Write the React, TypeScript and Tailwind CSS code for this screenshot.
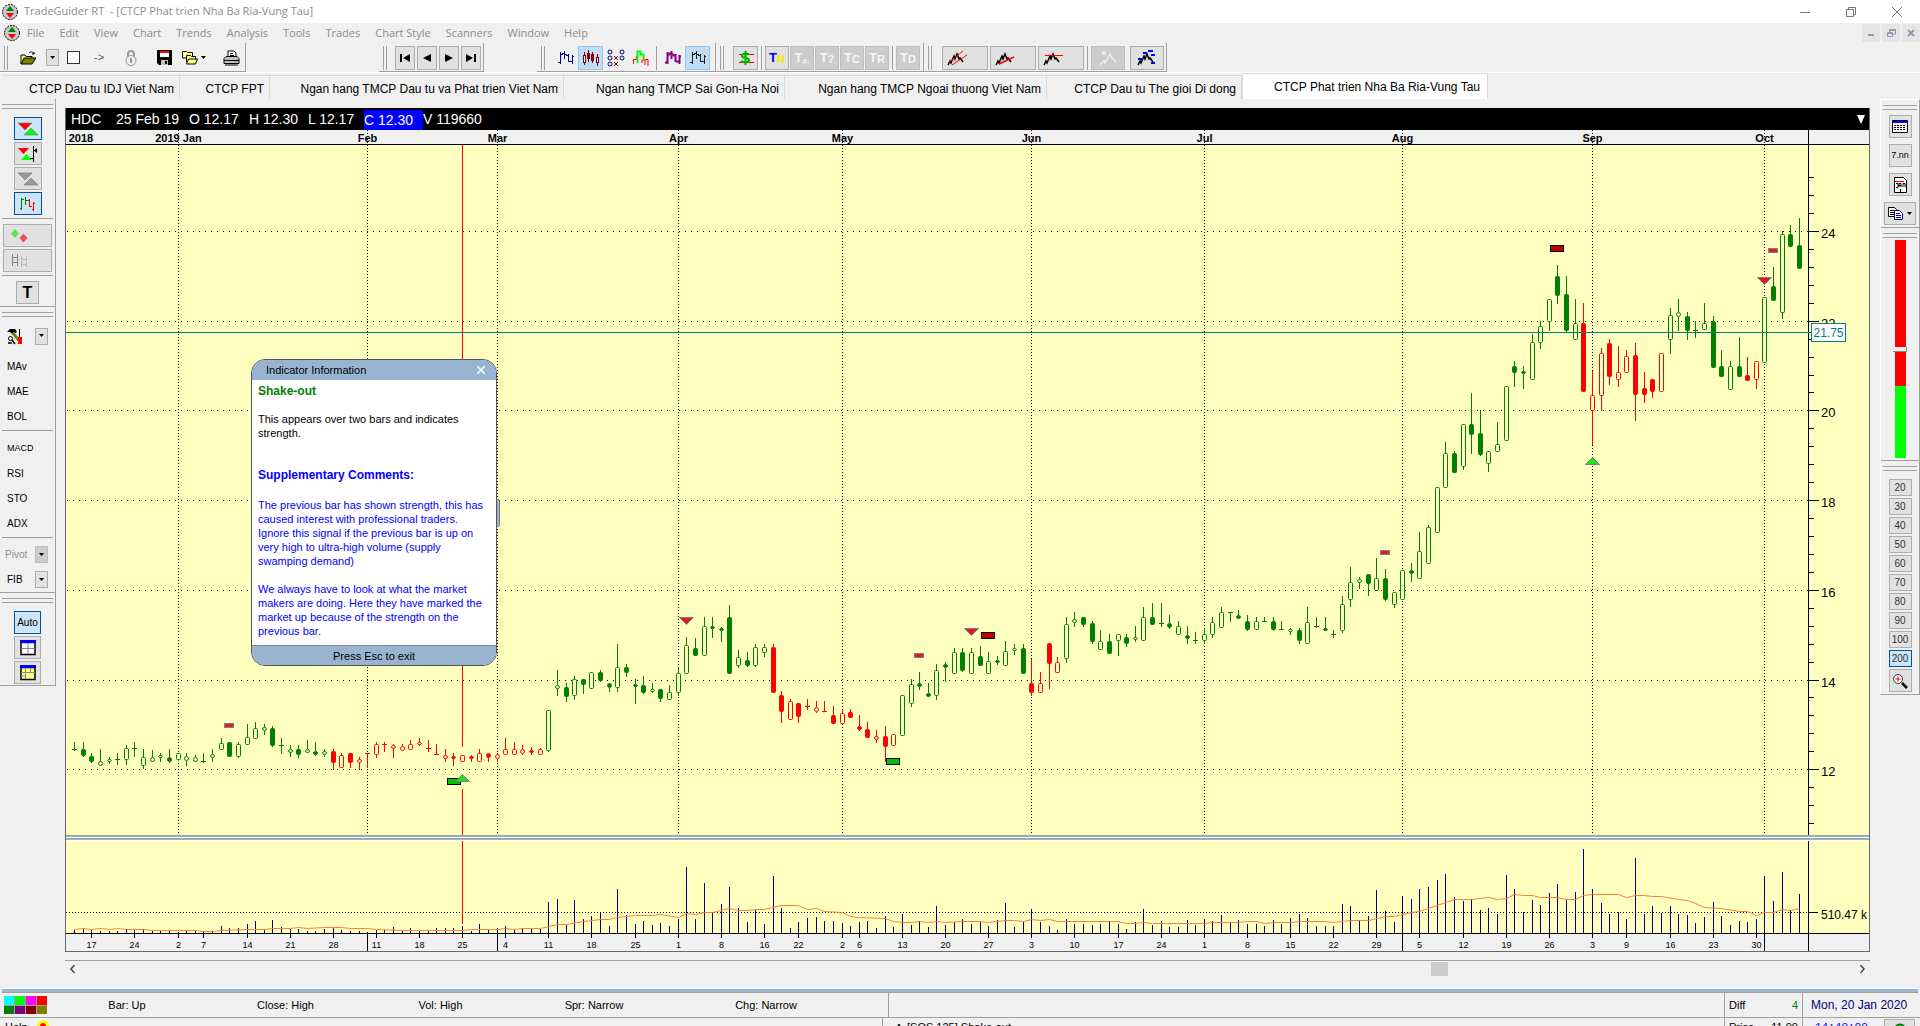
import React from 'react';
import { clsx } from 'clsx';

// [high, body top, body bottom, low, kind] - kind: g/r hollow, G/R filled
type Candle = [number, number, number, number, string];

const candles: Candle[] = [
  [742, 749, 749, 750, 'g'], [742, 749, 755, 756, 'G'], [753, 756, 761, 762, 'G'], [749, 761, 765, 765, 'g'], [757, 759, 761, 763, 'g'],
  [753, 759, 759, 764, 'g'], [745, 748, 759, 764, 'g'], [742, 748, 748, 756, 'g'], [749, 757, 765, 768, 'g'], [750, 757, 761, 761, 'g'],
  [753, 755, 757, 761, 'g'], [749, 757, 761, 762, 'G'], [753, 753, 759, 760, 'g'], [753, 756, 760, 765, 'g'], [755, 757, 761, 761, 'g'],
  [753, 761, 761, 762, 'g'], [749, 754, 757, 761, 'g'], [738, 743, 749, 749, 'g'], [742, 742, 756, 756, 'G'], [742, 744, 756, 757, 'g'],
  [724, 737, 744, 744, 'g'], [722, 728, 738, 738, 'g'], [724, 727, 730, 734, 'g'], [726, 728, 745, 746, 'G'], [738, 745, 745, 753, 'g'],
  [745, 749, 752, 756, 'g'], [745, 749, 754, 757, 'G'], [740, 749, 752, 752, 'g'], [742, 751, 754, 755, 'G'], [749, 751, 754, 756, 'g'],
  [749, 751, 762, 769, 'R'], [753, 755, 767, 767, 'r'], [753, 753, 762, 767, 'R'], [757, 759, 762, 769, 'r'], [753, 753, 753, 767, 'R'],
  [742, 744, 754, 757, 'r'], [742, 744, 744, 751, 'r'], [744, 745, 748, 757, 'r'], [744, 746, 750, 750, 'r'], [740, 744, 749, 749, 'r'],
  [738, 742, 744, 745, 'r'], [740, 748, 748, 751, 'R'], [744, 754, 754, 754, 'R'], [749, 755, 758, 761, 'r'], [753, 756, 758, 765, 'R'],
  [755, 755, 761, 761, 'r'], [755, 756, 758, 761, 'R'], [749, 753, 761, 761, 'r'], [753, 753, 757, 761, 'R'], [753, 754, 758, 761, 'r'],
  [738, 749, 754, 754, 'r'], [742, 749, 754, 754, 'r'], [745, 749, 753, 754, 'r'], [747, 750, 752, 754, 'R'], [748, 749, 754, 754, 'r'],
  [710, 710, 750, 751, 'g'], [670, 685, 688, 695, 'g'], [683, 687, 696, 701, 'G'], [676, 679, 695, 699, 'g'], [679, 679, 684, 693, 'G'],
  [672, 672, 688, 688, 'g'], [670, 672, 680, 681, 'G'], [683, 683, 687, 691, 'G'], [644, 667, 687, 691, 'g'], [664, 667, 672, 676, 'G'],
  [679, 684, 686, 703, 'G'], [676, 685, 692, 693, 'G'], [683, 689, 691, 692, 'g'], [689, 689, 698, 701, 'G'], [685, 692, 699, 699, 'g'],
  [667, 673, 692, 695, 'g'], [637, 645, 673, 673, 'g'], [638, 648, 655, 655, 'G'], [617, 626, 655, 655, 'g'], [617, 626, 628, 637, 'G'],
  [627, 628, 630, 641, 'G'], [605, 617, 673, 673, 'G'], [650, 657, 665, 667, 'g'], [652, 660, 665, 666, 'G'], [644, 647, 665, 666, 'g'],
  [644, 647, 652, 656, 'g'], [644, 647, 692, 692, 'R'], [691, 695, 711, 722, 'R'], [699, 701, 719, 719, 'r'], [703, 703, 716, 722, 'R'],
  [699, 706, 706, 709, 'R'], [701, 707, 711, 712, 'r'], [701, 711, 711, 711, 'R'], [706, 715, 723, 723, 'R'], [710, 713, 723, 723, 'r'],
  [709, 712, 717, 717, 'R'], [715, 726, 729, 730, 'R'], [722, 729, 737, 737, 'R'], [730, 736, 739, 742, 'r'], [726, 736, 746, 761, 'R'],
  [734, 734, 745, 745, 'r'], [695, 695, 735, 735, 'g'], [679, 684, 703, 706, 'g'], [672, 683, 686, 689, 'G'], [683, 693, 696, 696, 'G'],
  [664, 670, 695, 699, 'g'], [662, 664, 667, 681, 'G'], [648, 652, 673, 673, 'g'], [648, 652, 670, 671, 'G'], [648, 652, 673, 673, 'g'],
  [646, 656, 665, 665, 'G'], [652, 661, 673, 673, 'g'], [656, 660, 662, 664, 'G'], [641, 651, 665, 665, 'g'], [644, 648, 650, 654, 'g'],
  [644, 648, 673, 673, 'G'], [659, 683, 692, 695, 'R'], [672, 683, 692, 692, 'r'], [643, 643, 663, 688, 'R'], [657, 662, 672, 672, 'r'],
  [617, 624, 658, 662, 'g'], [612, 619, 622, 626, 'g'], [617, 617, 624, 626, 'G'], [621, 623, 641, 643, 'G'], [630, 641, 649, 649, 'g'],
  [634, 641, 653, 653, 'G'], [634, 634, 640, 655, 'g'], [634, 637, 643, 646, 'G'], [626, 637, 639, 641, 'g'], [607, 617, 640, 640, 'g'],
  [603, 617, 624, 624, 'G'], [603, 623, 623, 626, 'G'], [615, 623, 627, 628, 'G'], [621, 626, 634, 634, 'g'], [626, 635, 638, 643, 'G'],
  [632, 640, 640, 643, 'G'], [628, 634, 640, 643, 'g'], [617, 622, 634, 637, 'g'], [607, 612, 627, 627, 'g'], [612, 612, 612, 621, 'G'],
  [610, 615, 618, 618, 'G'], [615, 621, 629, 630, 'G'], [617, 621, 629, 629, 'g'], [617, 621, 621, 621, 'G'], [617, 621, 629, 630, 'G'],
  [621, 629, 629, 629, 'G'], [628, 629, 631, 634, 'g'], [628, 630, 640, 643, 'G'], [607, 622, 643, 643, 'g'], [617, 626, 626, 627, 'G'],
  [617, 628, 630, 630, 'G'], [630, 634, 634, 637, 'G'], [596, 604, 630, 632, 'g'], [567, 582, 599, 606, 'g'], [577, 579, 582, 588, 'g'],
  [574, 574, 583, 595, 'G'], [558, 578, 590, 590, 'g'], [569, 578, 599, 600, 'G'], [592, 592, 604, 607, 'g'], [570, 570, 599, 599, 'g'],
  [563, 570, 573, 581, 'G'], [532, 551, 578, 578, 'g'], [525, 527, 563, 563, 'g'], [487, 487, 532, 532, 'g'], [442, 453, 487, 487, 'g'],
  [451, 453, 472, 472, 'G'], [424, 424, 466, 469, 'g'], [393, 424, 434, 453, 'G'], [410, 433, 454, 455, 'G'], [451, 451, 463, 471, 'g'],
  [422, 444, 451, 451, 'g'], [386, 386, 440, 440, 'g'], [361, 366, 372, 386, 'G'], [366, 371, 373, 388, 'G'], [334, 342, 379, 379, 'g'],
  [321, 326, 342, 348, 'g'], [299, 299, 321, 330, 'g'], [265, 276, 295, 303, 'G'], [276, 294, 330, 331, 'G'], [299, 323, 339, 339, 'g'],
  [303, 323, 391, 391, 'R'], [371, 395, 410, 444, 'r'], [348, 353, 395, 410, 'r'], [339, 343, 376, 384, 'R'], [346, 372, 379, 386, 'r'],
  [350, 356, 372, 372, 'r'], [343, 355, 394, 420, 'R'], [372, 388, 394, 402, 'R'], [379, 379, 391, 397, 'R'], [353, 353, 391, 391, 'r'],
  [308, 315, 339, 353, 'g'], [299, 312, 316, 330, 'g'], [312, 316, 330, 339, 'G'], [321, 330, 330, 337, 'G'], [303, 323, 329, 329, 'g'],
  [316, 321, 367, 367, 'G'], [350, 366, 376, 376, 'G'], [361, 366, 389, 389, 'g'], [337, 366, 376, 376, 'G'], [357, 375, 380, 380, 'R'],
  [361, 361, 379, 388, 'r'], [297, 297, 362, 362, 'g'], [267, 286, 300, 300, 'G'], [231, 234, 312, 318, 'g'], [225, 234, 246, 246, 'G'],
  [218, 245, 268, 268, 'G'],
];

const volumes = [
  3, 4, 3, 2, 2, 2, 4, 3, 4, 2, 3, 2, 1, 3, 2, 2, 2, 7, 5, 5, 9, 12, 3, 13, 6, 4, 4, 2, 2, 4, 5, 3, 2, 2, 1, 3, 3, 6, 2, 5,
  3, 3, 5, 5, 5, 7, 2, 9, 4, 5, 7, 3, 5, 4, 4, 31, 34, 8, 33, 14, 17, 21, 7, 44, 18, 9, 12, 8, 10, 7, 14, 66, 14, 50, 21, 29, 46, 25, 11, 23,
  9, 57, 25, 5, 11, 15, 16, 12, 12, 10, 7, 11, 12, 5, 17, 6, 19, 8, 12, 6, 27, 8, 11, 14, 9, 11, 7, 13, 30, 6, 11, 24, 11, 7, 3, 14, 9, 9, 8, 9,
  12, 9, 4, 11, 24, 8, 12, 6, 6, 13, 8, 14, 12, 18, 10, 13, 9, 9, 7, 13, 9, 15, 19, 15, 7, 7, 7, 29, 27, 12, 17, 43, 22, 11, 37, 34, 44, 46, 53, 59,
  36, 32, 34, 23, 25, 19, 58, 44, 21, 33, 28, 40, 49, 33, 41, 84, 44, 30, 19, 21, 14, 75, 19, 27, 20, 27, 19, 18, 10, 16, 31, 17, 8, 12, 11, 14, 57, 32, 61, 23,
  39,
];

// [bar, height above the base line]
const volumeAverage = [
  [0, 4], [1, 5], [2, 4], [3, 5], [4, 4], [5, 5], [6, 4], [8, 4], [9, 3], [14, 3], [15, 2], [16, 2], [17, 3], [20, 4], [22, 4], [23, 5],
  [25, 5], [26, 6], [27, 5], [29, 6], [31, 6], [32, 5], [34, 5], [35, 4], [38, 3], [45, 3], [46, 4], [49, 4], [50, 5], [51, 4], [52, 5],
  [54, 5], [56, 9], [57, 9], [59, 12], [61, 14], [62, 14], [63, 16], [65, 18], [67, 18], [68, 19], [70, 16], [71, 20], [72, 19], [73, 21],
  [74, 21], [76, 25], [77, 23], [78, 23], [79, 24], [80, 24], [82, 28], [84, 28], [85, 24], [86, 25], [87, 22], [89, 21], [90, 17],
  [91, 16], [94, 15], [95, 12], [96, 11], [97, 11], [98, 12], [99, 11], [100, 12], [101, 11], [103, 12], [105, 12], [106, 11], [108, 13],
  [109, 13], [110, 12], [111, 14], [112, 13], [113, 14], [114, 12], [121, 12], [122, 10], [123, 10], [124, 11], [125, 10], [131, 10],
  [132, 11], [135, 11], [136, 12], [137, 12], [138, 10], [139, 11], [141, 11], [142, 12], [145, 12], [146, 11], [148, 13], [150, 13],
  [152, 17], [153, 17], [155, 21], [156, 22], [157, 25], [160, 34], [162, 34], [164, 36], [165, 34], [166, 35], [167, 39], [168, 38],
  [169, 38], [170, 36], [172, 36], [173, 34], [174, 34], [175, 38], [176, 39], [179, 39], [180, 36], [181, 38], [182, 38], [183, 37],
  [184, 37], [186, 34], [187, 33], [188, 30], [189, 26], [191, 25], [193, 22], [194, 22], [195, 18], [196, 21], [197, 21], [198, 24],
  [199, 23], [200, 25],
];

const months: [number, string][] = [
  [12, '2019 Jan'], [34, 'Feb'], [49, 'Mar'], [70, 'Apr'], [89, 'May'], [111, 'Jun'], [131, 'Jul'], [154, 'Aug'], [176, 'Sep'], [196, 'Oct'],
];

const days: [number, number][] = [
  [2, 17], [7, 24], [12, 2], [15, 7], [20, 14], [25, 21], [30, 28], [35, 11], [40, 18], [45, 25], [50, 4], [55, 11], [60, 18], [65, 25],
  [70, 1], [75, 8], [80, 16], [84, 22], [89, 2], [91, 6], [96, 13], [101, 20], [106, 27], [111, 3], [116, 10], [121, 17], [126, 24],
  [131, 1], [136, 8], [141, 15], [146, 22], [151, 29], [156, 5], [161, 12], [166, 19], [171, 26], [176, 3], [180, 9], [185, 16],
  [190, 23], [195, 30],
];

const barX = (i: number) => Math.round(74.01 + i * 8.6245) + 0.5;
const priceY = (p: number) => Math.round(231 + (24 - p) * 44.85) + 0.5;

const CandleBar = ({ index, data }: { index: number; data: Candle }) => {
  const [high, top, bottom, low, kind] = data;
  const x = barX(index);
  const color = kind.toLowerCase() === 'g' ? '#008000' : '#ff0000';
  const filled = kind === 'G' || kind === 'R';
  if (top === bottom) {
    return <path d={`M${x} ${high}V${low + 1}M${x - 2.5} ${top + 0.5}h5`} stroke={color} fill="none" />;
  }
  return (
    <g stroke={color}>
      <path d={`M${x} ${high}V${top}M${x} ${bottom + 1}V${low + 1}`} />
      <rect x={x - 2} y={top + 0.5} width={4} height={bottom - top} rx={bottom - top <= 4 ? 2 : 1} fill={filled ? color : '#ffffc0'} />
    </g>
  );
};

const SmallMark = ({ x, y }: { x: number; y: number }) => (
  <rect x={x + 0.5} y={y + 0.5} width={9} height={4} fill="#e01b24" stroke="#808080" />
);

const BoxMark = ({ x, y, fill }: { x: number; y: number; fill: string }) => (
  <rect x={x + 0.5} y={y + 0.5} width={13} height={6} fill={fill} stroke="#000" />
);

const PriceChart = () => {
  const minorTicks = Array.from({ length: 37 }, (_, i) => 25.2 - i * 0.4).filter((p) => p > 10.7);
  return (
    <svg viewBox="66 130 1803 705" preserveAspectRatio="none" className="block h-[705px] w-full" aria-label="HDC price chart">
      <rect x={66} y={130} width={1803} height={14} fill="#f0f0f0" />
      <rect x={66} y={145} width={1803} height={690} fill="#ffffc0" />
      <path d="M66 144.5H1869" stroke="#000" />
      <g stroke="#000" fill="none">
        {[24, 22, 20, 18, 16, 14, 12].map((p) => (
          <path key={p} d={`M67 ${priceY(p)}H1808`} strokeDasharray="1 5" />
        ))}
        {months.map(([i]) => (
          <path key={i} d={`M${barX(i)} 130V834`} strokeDasharray="1 2" />
        ))}
        <path d="M1808.5 130V835" />
        {minorTicks.map((p) => (
          <path key={p} d={`M1809 ${priceY(p)}h5`} />
        ))}
        {[24, 22, 20, 18, 16, 14, 12].map((p) => (
          <path key={p} d={`M1809 ${priceY(p)}h10`} />
        ))}
      </g>
      <g fontSize={11} fontWeight="bold" textAnchor="middle">
        <text x={81} y={142}>2018</text>
        {months.map(([i, label]) => (
          <text key={i} x={barX(i)} y={142}>{label}</text>
        ))}
      </g>
      <g fontSize={13}>
        {[24, 22, 20, 18, 16, 14, 12].map((p) => (
          <text key={p} x={1821} y={priceY(p) + 6}>{p}</text>
        ))}
      </g>
      <path d="M462.5 145V747M462.5 789V835" stroke="#ff0000" />
      {candles.map((c, i) => (
        <CandleBar key={i} index={i} data={c} />
      ))}
      <SmallMark x={224} y={723} />
      <SmallMark x={914} y={653} />
      <SmallMark x={1380} y={550} />
      <SmallMark x={1768} y={248} />
      <BoxMark x={981} y={632} fill="#c00000" />
      <BoxMark x={1550} y={245} fill="#c00000" />
      <BoxMark x={886} y={758} fill="#00c000" />
      <BoxMark x={447} y={778} fill="#00c000" />
      <g fill="#e01b24" stroke="#808080">
        <path d="M679.5 617.5h14l-7 7z" />
        <path d="M964.5 628.5h14l-7 7z" />
        <path d="M1757.5 277.5h14l-7 7z" />
      </g>
      <g fill="#22e022" stroke="#808080">
        <path d="M455.5 781.5h14l-7-7z" />
        <path d="M1585.5 464.5h14l-7-7z" />
      </g>
      <path d="M66 332.5H1811" stroke="#008080" />
      <rect x={1811.5} y={323.5} width={34} height={18} fill="#fff" stroke="#008080" />
      <text x={1828.5} y={337} fontSize={12} fill="#008080" textAnchor="middle">21.75</text>
    </svg>
  );
};

const VolumeChart = () => (
  <svg viewBox="66 841 1803 110" preserveAspectRatio="none" className="block h-[110px] w-full" aria-label="Volume chart">
    <rect x={66} y={841} width={1803} height={92} fill="#ffffc0" />
    <rect x={66} y={934} width={1803} height={17} fill="#f0f0f0" />
    <path d="M66 912.5H1808" stroke="#000" strokeDasharray="1 2" />
    <path d="M1808 912.5h10M1808.5 841V951" stroke="#000" />
    <path d="M462.5 841V924" stroke="#ff0000" />
    <path d={volumes.map((v, i) => `M${barX(i)} 933v-${v}`).join('')} stroke="#000080" />
    <polyline points={volumeAverage.map(([i, h]) => `${barX(i)},${933.5 - h}`).join(' ')} fill="none" stroke="#ff7f40" />
    <path d="M66 933.5H1869" stroke="#000" />
    <path d={[34, 49, 154, 196].map((i) => `M${barX(i)} 934V951`).join('')} stroke="#000" />
    <g fontSize={9} textAnchor="middle">
      {days.map(([i, d]) => (
        <React.Fragment key={i}>
          <path d={`M${barX(i)} 934v4`} stroke="#000" />
          <text x={barX(i)} y={948}>{d}</text>
        </React.Fragment>
      ))}
    </g>
    <text x={1821} y={919} fontSize={12}>510.47 k</text>
  </svg>
);

const AppIcon = () => (
  <svg viewBox="0 0 16 16" className="size-4">
    <circle cx="8" cy="8" r="7.5" fill="#c8c8c8" stroke="#000" strokeDasharray="2 1" />
    <path d="M8 2l4 5H4z" fill="#008000" />
    <path d="M8 14l4-5H4z" fill="#ff0000" />
  </svg>
);

const Grip = () => (
  <span className="mr-1 ml-1 flex h-6 w-1 shrink-0 border-x border-[#a0a0a0]" />
);

const Divider = () => <span className="mx-[3px] h-6 w-px shrink-0 bg-[#a0a0a0]" />;

interface ToolProps {
  label: string;
  look?: 'flat' | 'raised' | 'active' | 'disabled';
  className?: string;
  children?: React.ReactNode;
}

const Tool = ({ label, look = 'raised', className, children }: ToolProps) => (
  <button
    aria-label={label}
    disabled={look === 'disabled'}
    className={clsx(
      'flex shrink-0 items-center justify-center',
      look === 'raised' && 'border border-[#adadad] bg-[#e1e1e1]',
      look === 'active' && 'border border-[#92c8f0] bg-[#bfddf5]',
      look === 'disabled' && 'border border-[#bfbfbf] bg-[#cccccc] text-[#f5f5f5]',
      className,
    )}
  >
    {children}
  </button>
);

const Arrow = () => (
  <svg viewBox="0 0 7 4" className="h-1 w-[7px]"><path d="M1 0h5L3.500 3z" /></svg>
);

const BarsIcon = ({ color, thick }: { color: string; thick?: boolean }) => (
  <svg viewBox="0 0 16 16" className="size-4" fill="none" stroke={color} strokeWidth={thick ? 2 : 1}>
    <path d="M2.500 2v12M0 12.500h2M3 4.500h2M6.500 1v8M7 4.500h2M4 3.500h2M10.500 4v8M8 5.500h2M11 11.500h3M14.500 5v9M15 6.500h1" />
  </svg>
);

const ZigZag = () => <path d="M1 15l2-4 1 2 3-7 1 3 2-5 2 5 1-1 3 4" fill="none" stroke="#000" strokeWidth="1.500" />;

const menus = ['File', 'Edit', 'View', 'Chart', 'Trends', 'Analysis', 'Tools', 'Trades', 'Chart Style', 'Scanners', 'Window', 'Help'];

const TitleBar = () => (
  <header className="font-['Open_Sans','Segoe_UI',sans-serif] text-[11px] text-[#8c8c8c]">
    <div className="flex h-[23px] items-center bg-white pl-[2px]">
      <AppIcon />
      <h1 className="flex-1 pl-[6px] whitespace-pre">TradeGuider RT  - [CTCP Phat trien Nha Ba Ria-Vung Tau]</h1>
      <button aria-label="Minimize" className="flex w-[46px] justify-center">
        <svg viewBox="0 0 10 10" className="size-[10px]" stroke="#777"><path d="M0 5.500h10" /></svg>
      </button>
      <button aria-label="Restore" className="flex w-[46px] justify-center">
        <svg viewBox="0 0 10 10" className="size-[10px]" fill="none" stroke="#777"><path d="M.5 2.500h7v7h-7zM2.500 2V.5h7v7H8" /></svg>
      </button>
      <button aria-label="Close" className="flex w-[46px] justify-center">
        <svg viewBox="0 0 10 10" className="size-[10px]" stroke="#777"><path d="M0 0l10 10M10 0L0 10" /></svg>
      </button>
    </div>
    <div className="flex h-5 items-center bg-[#f0f0f0] pl-1">
      <AppIcon />
      <nav className="flex flex-1 gap-[15px] pl-[7px]">
        {menus.map((m) => <button key={m}>{m}</button>)}
      </nav>
      <div className="flex gap-[2px] font-bold text-[#8a9bb0]">
        <button aria-label="Minimize chart" className="flex h-[18px] w-[18px] items-center justify-center bg-[#e5e5e5]">
          <svg viewBox="0 0 8 8" className="size-2"><path d="M1 5h6v2H1z" fill="currentColor" /></svg>
        </button>
        <button aria-label="Restore chart" className="flex h-[18px] w-[18px] items-center justify-center bg-[#e5e5e5]">
          <svg viewBox="0 0 9 9" className="size-[9px]" fill="none" stroke="currentColor"><path d="M.5 3.500h5v4h-5zM.5 4.500h5M2.500 3V.5h6v4.500H6M2.500 1.500h6" /></svg>
        </button>
        <button aria-label="Close chart" className="flex h-[18px] w-[18px] items-center justify-center bg-[#e5e5e5]">
          <svg viewBox="0 0 8 8" className="size-2" stroke="currentColor" strokeWidth="2"><path d="M1 1l6 6M7 1L1 7" /></svg>
        </button>
      </div>
    </div>
  </header>
);

const barClass = 'flex h-[29px] items-center border-r border-b border-[#a0a0a0] pt-px';

const Toolbars = () => (
  <div className="flex h-[30px] border-b border-white bg-[#f0f0f0]">
    <div className={clsx(barClass, 'w-[246px]')}>
      <Grip />
      <Tool label="Open" look="flat" className="ml-2">
        <svg viewBox="0 0 16 14" className="h-[14px] w-4" stroke="#000">
          <path d="M1 13V4h4l1 1.500h6V7" fill="#ffff80" />
          <path d="M1 13l3-6h12l-4 6z" fill="#808000" />
          <path d="M9 2c2-2 4-1 5 1m0-2v2h-2" fill="none" />
        </svg>
      </Tool>
      <Tool label="Recent files" className="ml-[10px] h-[17px] w-[13px]"><Arrow /></Tool>
      <Tool label="Blank" look="flat" className="ml-2 size-[13px] border border-[#333] bg-white" />
      <Tool label="Next" look="flat" className="ml-[14px] text-[11px] text-[#555]">-&gt;</Tool>
      <Tool label="Lock" look="flat" className="ml-5">
        <svg viewBox="0 0 14 16" className="h-4 w-[14px]" fill="#f0f0f0" stroke="#999">
          <path d="M4 7V4c0-4 6-4 6 0v3" fill="none" strokeWidth="2" />
          <circle cx="7" cy="10.500" r="5" />
          <path d="M7 8v5" strokeWidth="2" />
        </svg>
      </Tool>
      <Tool label="Save" look="flat" className="ml-[19px]">
        <svg viewBox="0 0 15 15" className="size-[15px]">
          <path d="M0 0h15v15H2l-2-2z" />
          <path d="M3 1h9v6H3z" fill="#fff" /><path d="M3 1h9v2H3z" fill="#f00" />
          <path d="M4 10h7v5H4z" fill="#c0c0c0" /><path d="M8 11h2v3H8z" />
        </svg>
      </Tool>
      <Tool label="Open workspace" look="flat" className="ml-[10px] gap-[2px]">
        <svg viewBox="0 0 16 15" className="h-[15px] w-4" stroke="#000" fill="#ffff80">
          <path d="M.5 8V1.500h4l1 1h5V8z" />
          <path d="M4.500 12V5.500h4l1 1h4V9" />
          <path d="M4.500 14l2-5h9l-2 5z" />
        </svg>
        <Arrow />
      </Tool>
      <Tool label="Print" look="flat" className="ml-4">
        <svg viewBox="0 0 17 16" className="h-4 w-[17px]" stroke="#000">
          <path d="M5 8V1h6l2 2v5" fill="#fff" /><path d="M7 3.500h3M7 5.500h4" />
          <path d="M1 8.500l2-2h11l2 2v5H1z" fill="#c0c0c0" /><path d="M1 10.500h15M2 15h13" />
        </svg>
      </Tool>
    </div>
    <div className={clsx(barClass, 'ml-[133px] w-[105px]')}>
      <Grip />
      <div className="ml-1 flex gap-[2px]">
        <Tool label="First" className="h-6 w-5"><svg viewBox="0 0 10 8" className="h-2 w-[10px]"><path d="M0 0h2v8H0zM10 0v8L3 4z" /></svg></Tool>
        <Tool label="Previous" className="h-6 w-5"><svg viewBox="0 0 8 8" className="size-2"><path d="M8 0v8L0 4z" /></svg></Tool>
        <Tool label="Next bar" className="h-6 w-5"><svg viewBox="0 0 8 8" className="size-2"><path d="M0 0v8l8-4z" /></svg></Tool>
        <Tool label="Last" className="h-6 w-5"><svg viewBox="0 0 10 8" className="h-2 w-[10px]"><path d="M8 0h2v8H8zM0 0v8l7-4z" /></svg></Tool>
      </div>
    </div>
    <div className={clsx(barClass, 'ml-[53px] w-[179px]')}>
      <Grip />
      <Tool label="Bars" look="flat" className="ml-1 h-6 w-[25px]"><BarsIcon color="#000080" /></Tool>
      <Tool label="Candles" look="active" className="h-6 w-[25px]">
        <svg viewBox="0 0 17 16" className="h-4 w-[17px]" stroke="#800000" fill="#800000">
          <path d="M2.500 2v13M6.500 0v12M10.500 2v11M15.500 4v12" />
          <rect x="1.500" y="5.500" width="2" height="7" fill="#fff" /><rect x="5.500" y="3.500" width="2" height="5" />
          <rect x="9.500" y="4.500" width="2" height="6" /><rect x="14.500" y="7.500" width="2" height="5" fill="#fff" />
        </svg>
      </Tool>
      <Tool label="Point and figure" look="flat" className="h-6 w-[25px]">
        <svg viewBox="0 0 18 18" className="size-[18px]" fill="none" stroke="#000080">
          <circle cx="3" cy="3" r="2" /><circle cx="3" cy="9" r="2" /><circle cx="3" cy="15" r="2" /><circle cx="15" cy="3" r="2" /><circle cx="15" cy="9" r="2" />
          <path d="M7 7l4 4M11 7l-4 4M7 13l4 4M11 13l-4 4" stroke="#800000" />
        </svg>
      </Tool>
      <Tool label="Kagi" look="flat" className="h-6 w-[25px]">
        <svg viewBox="0 0 16 16" className="size-4" fill="none">
          <path d="M.5 14V9.500h3V6M12 9.500h3V16M9 13v-3h3v5" stroke="#f00" /><path d="M4.500 13V1.500h3v3h3V9" stroke="#0f0" strokeWidth="2" />
        </svg>
      </Tool>
      <Divider />
      <Tool label="Thick bars" look="flat" className="h-6 w-[25px]"><BarsIcon color="#800080" thick /></Tool>
      <Tool label="Colour bars" look="active" className="h-6 w-[25px]"><BarsIcon color="#222" /></Tool>
    </div>
    <div className={clsx(barClass, 'w-[208px]')}>
      <Grip />
      <Tool label="Money" className="ml-[5px] h-6 w-[25px]">
        <svg viewBox="0 0 18 16" className="h-4 w-[18px]" fill="none">
          <path d="M2 4.500h15M2 12.500h15" stroke="#f00" />
          <path d="M12 5c-1-2-7-2-7 1s7 1 7 4-6 3-8 1M8.500 1v14" stroke="#00b000" strokeWidth="2" />
        </svg>
      </Tool>
      <Divider />
      <Tool label="Trend now" className="h-6 w-6 text-[13px] font-bold text-[#0000ff]">T<span className="pt-1 text-[11px] text-[#ffe600]">N</span></Tool>
      <Tool label="Trend line" look="disabled" className="ml-px h-6 w-6 text-[13px] font-bold">T<span className="pt-2 text-[8px]">#-</span></Tool>
      <Tool label="Trend query" look="disabled" className="ml-px h-6 w-6 text-[13px] font-bold">T<span className="pt-1 text-[11px]">?</span></Tool>
      <Tool label="Trend channel" look="disabled" className="ml-px h-6 w-6 text-[13px] font-bold">T<span className="pt-1 text-[11px]">C</span></Tool>
      <Tool label="Trend reverse" look="disabled" className="ml-px h-6 w-6 text-[13px] font-bold">T<span className="pt-1 text-[11px]">R</span></Tool>
      <Divider />
      <Tool label="Trend delete" look="disabled" className="h-6 w-6 text-[13px] font-bold">T<span className="pt-1 text-[11px]">D</span></Tool>
    </div>
    <div className={clsx(barClass, 'w-[243px]')}>
      <Grip />
      <div className="ml-[6px] flex gap-[2px]">
        <Tool label="Channel lines" className="h-6 w-[46px] pr-4"><svg viewBox="0 0 20 16" className="h-4 w-5"><ZigZag /><path d="M1 13L16 1M5 15L20 5" stroke="#f00" /></svg></Tool>
        <Tool label="Support line" className="h-6 w-[46px] pr-4"><svg viewBox="0 0 20 16" className="h-4 w-5"><ZigZag /><path d="M4 14L19 7" stroke="#f00" strokeWidth="1.500" /></svg></Tool>
        <Tool label="Resistance line" className="h-6 w-[46px] pr-4"><svg viewBox="0 0 20 16" className="h-4 w-5"><ZigZag /><path d="M2 5.500h18" stroke="#f00" /></svg></Tool>
      </div>
      <Divider />
      <Tool label="Clear lines" look="disabled" className="h-6 w-[34px]"><svg viewBox="0 0 18 16" className="h-4 w-[18px]" fill="none" stroke="#eee" strokeWidth="1.500"><path d="M1 15l4-4 1 2 5-9 2 4 4 4M3 1l4 4M7 1L3 5" /></svg></Tool>
      <Tool label="Auto lines" className="ml-[5px] h-6 w-[34px]">
        <svg viewBox="0 0 20 16" className="h-4 w-5"><ZigZag /><path d="M1 9h4M6 3h4M11 1h5M14 13h4M14 5h4" stroke="#00f" strokeWidth="2" /></svg>
      </Tool>
    </div>
  </div>
);

const tabs: [string, string][] = [
  ['CTCP Dau tu IDJ Viet Nam', 'w-[178px]'],
  ['CTCP FPT', 'w-[90px]'],
  ['Ngan hang TMCP Dau tu va Phat trien Viet Nam', 'w-[294px]'],
  ['Ngan hang TMCP Sai Gon-Ha Noi', 'w-[221px]'],
  ['Ngan hang TMCP Ngoai thuong Viet Nam', 'w-[262px]'],
  ['CTCP Dau tu The gioi Di dong', 'w-[195px]'],
];

const ChartTabs = () => (
  <div role="tablist" className="flex h-[26px] items-end pl-[2px] text-[12px]">
    {tabs.map(([label, width]) => (
      <button key={label} role="tab" aria-selected={false} className={clsx('h-6 shrink-0 border-t border-r border-[#d9d9d9] pt-[2px] pr-[5px] text-right whitespace-nowrap', width)}>
        {label}
      </button>
    ))}
    <button role="tab" aria-selected className="h-[26px] w-[246px] shrink-0 border border-b-0 border-[#d9d9d9] bg-white pr-[7px] text-right whitespace-nowrap">
      CTCP Phat trien Nha Ba Ria-Vung Tau
    </button>
  </div>
);

const RailGrip = () => <div className="mx-[2px] mt-[5px] h-[5px] shrink-0 border-y border-[#a0a0a0]" />;

const RailLine = () => <div className="mx-[2px] h-px shrink-0 bg-[#a0a0a0]" />;

const pressed = 'border border-[#005499] bg-[#cce4f7]';

const Triangles = ({ up, down }: { up: string; down: string }) => (
  <svg viewBox="0 0 22 14" className="h-[14px] w-[22px]">
    <path d="M1 1h14L8 8z" fill={down} stroke="#808080" strokeWidth=".7" />
    <path d="M7 13h14l-7-7z" fill={up} stroke="#808080" strokeWidth=".7" />
  </svg>
);

const LeftRail = () => (
  <aside className="flex w-14 shrink-0 flex-col self-start border-r border-b border-[#a0a0a0] text-[10px]">
    <RailGrip />
    <div className="flex flex-col items-center gap-[2px] pt-2 pb-[3px]">
      <Tool label="Show signals" look="flat" className={clsx('h-[23px] w-7', pressed)}><Triangles up="#00ff00" down="#ff0000" /></Tool>
      <Tool label="Signals on bars" className="h-[23px] w-7">
        <svg viewBox="0 0 20 16" className="h-4 w-5"><path d="M0 2h11L5.500 8z" fill="#f00" /><path d="M3 14h11L8.500 8z" fill="#0f0" /><path d="M15.500 0v16M16 4.500h2M12 12.500h3" stroke="#000" fill="none" /><path d="M16 4.500l3-2.500v5z" /></svg>
      </Tool>
      <Tool label="Hide signals" className="h-[23px] w-7"><Triangles up="#999" down="#999" /></Tool>
      <Tool label="Coloured bars" look="flat" className={clsx('h-[23px] w-7', pressed)}>
        <svg viewBox="0 0 16 16" className="size-4" fill="none"><path d="M1.500 2v12M0 12.500h1M2 3.500h2M5.500 1v8M6 4.500h2" stroke="#008000" /><path d="M9.500 3v8M8 4.500h1M10 10.500h2M13.500 6v9M12 13.500h1M14 7.500h1" stroke="#f00" /></svg>
      </Tool>
    </div>
    <RailLine />
    <div className="flex flex-col gap-[2px] px-[3px] py-[3px] pt-[5px]">
      <Tool label="Diamonds" className="h-[23px] justify-start! pl-[6px]">
        <svg viewBox="0 0 18 14" className="h-[14px] w-[18px]"><path d="M5 0l4 4.500L5 9 1 4.500z" fill="#5fe35f" /><path d="M13.500 4.500l4 4.500-4 4.500-4-4.500z" fill="#f05050" /></svg>
      </Tool>
      <Tool label="Ladders" className="h-[23px] justify-start! pl-[7px]">
        <svg viewBox="0 0 17 13" className="h-[13px] w-[17px]" fill="none"><path d="M1.500 0v12M6.500 0v12M1 3.500h6M1 8.500h6" stroke="#888" /><path d="M10.500 2v11M15.500 2v11M10 5.500h6M10 10.500h6" stroke="#bbb" /></svg>
      </Tool>
    </div>
    <RailLine />
    <div className="flex justify-center pt-[5px] pb-[2px]">
      <Tool label="Text" className="size-[23px] text-[16px] font-bold">T</Tool>
    </div>
    <div className="h-px bg-[#a0a0a0]" />
    <RailGrip />
    <div className="flex h-[37px] items-center pt-px pl-[7px]">
      <Tool label="Settings" look="flat">
        <svg viewBox="0 0 17 17" className="size-[17px]">
          <path d="M0 4l3-3h5l2 3-2 1-1-1-2 2-2-2z" /><path d="M6 5l8 10" stroke="#808000" strokeWidth="3" /><path d="M12.500 1v8" stroke="#000" />
          <path d="M11 9h4v7h-4z" fill="#f00" /><circle cx="3.500" cy="10.500" r="2" fill="#fff" stroke="#000" /><path d="M5 12l3 4M1 15h4" stroke="#000" strokeWidth="1.500" />
        </svg>
      </Tool>
      <Tool label="Settings menu" className="ml-[11px] h-[17px] w-[13px]"><Arrow /></Tool>
    </div>
    <div className="flex flex-col items-start pb-px pl-[7px]">
      {['MAv', 'MAE', 'BOL'].map((t) => <button key={t} className="h-[25px]">{t}</button>)}
    </div>
    <RailLine />
    <div className="flex flex-col items-start pt-[5px] pb-[1px] pl-[7px]">
      {['MACD', 'RSI', 'STO', 'ADX'].map((t) => <button key={t} className={clsx('h-[25px]', t === 'MACD' && 'text-[9px]')}>{t}</button>)}
    </div>
    <RailLine />
    <div className="flex flex-col pt-1">
      <div className="flex h-[25px] items-center">
        <button disabled className="w-[30px] pl-[5px] text-left text-[#909090]">Pivot</button>
        <Tool label="Pivot menu" look="disabled" className="ml-[5px] h-[17px] w-[13px]"><Arrow /></Tool>
      </div>
      <div className="flex h-[25px] items-center">
        <button className="w-[30px] pl-[7px] text-left">FIB</button>
        <Tool label="FIB menu" className="ml-[5px] h-[17px] w-[13px]"><Arrow /></Tool>
      </div>
    </div>
    <div className="h-px bg-[#a0a0a0]" />
    <RailGrip />
    <div className="flex flex-col items-center gap-[2px] pt-2 pb-[1px]">
      <button className={clsx('h-[23px] w-[27px]', pressed)}>Auto</button>
      <Tool label="Grid layout" className="h-[23px] w-[27px]">
        <svg viewBox="0 0 16 16" className="size-4"><path d="M1 2.500h14v12H1z" fill="#fff" stroke="#000" strokeWidth="1.500" /><path d="M8 3v11M1 8.500h14" stroke="#888" /><path d="M0 0h16v3H0z" fill="#00f" /></svg>
      </Tool>
      <Tool label="Custom layout" className="h-[23px] w-[27px]">
        <svg viewBox="0 0 16 16" className="size-4"><path d="M1 2.500h14v12H1z" fill="#ffff80" stroke="#000" strokeWidth="1.500" /><path d="M5.500 3v11M10.500 3v4M1 7.500h14M1 11h4" stroke="#888" /><path d="M0 0h16v3H0z" fill="#00f" /></svg>
      </Tool>
    </div>
  </aside>
);

const RightRail = () => (
  <aside className="flex w-10 shrink-0 flex-col self-start border border-t-white border-r-[#a0a0a0] border-b-[#a0a0a0] border-l-white text-[11px]">
    <RailGrip />
    <div className="flex flex-col items-center gap-[6px] pt-[5px] pb-[2px]">
      <Tool label="Data table" className="size-[23px]">
        <svg viewBox="0 0 16 13" className="h-[13px] w-4"><path d="M.5.5h15v12H.5z" fill="#fff" stroke="#000" /><path d="M1 1h14v2H1z" fill="#00f" /><path d="M2 5.500h12M2 7.500h12M2 9.500h12" stroke="#000" strokeDasharray="2 1" /></svg>
      </Tool>
      <Tool label="Decimals" className="size-[23px] text-[9px]">7.nn</Tool>
      <Tool label="Calendar" className="size-[23px]">
        <svg viewBox="0 0 13 16" className="h-4 w-[13px]"><path d="M.5.5h9l3 3v12H.5z" fill="#fff" stroke="#000" /><path d="M1 4.500h9" stroke="#f00" /><path d="M2 6.500h2v4H2M5 10V6.500h2V10M5 8.500h2M9 10V6.500h2V10M6.500 12v3" stroke="#000" fill="none" /></svg>
      </Tool>
      <Tool label="Copy" className="h-[23px] w-8 gap-[3px]">
        <svg viewBox="0 0 15 13" className="h-[13px] w-[15px]"><path d="M.5.5h6l2 2v7h-8z" fill="#fff" stroke="#000" /><path d="M2 3.500h4M2 5.500h5M2 7.500h4" stroke="#000" /><path d="M6.500 3.500h5l3 3v6h-8z" fill="#fff" stroke="#000080" /><path d="M8 6.500h4M8 8.500h5M8 10.500h5" stroke="#000080" /></svg>
        <Arrow />
      </Tool>
    </div>
    <div className="h-px bg-[#a0a0a0]" />
    <RailGrip />
    <div className="flex justify-center pt-[2px] pb-[2px]">
      <input
        type="range"
        aria-label="Signal strength"
        defaultValue={50}
        className="h-[218px] w-[15px] appearance-none bg-[linear-gradient(#f00_67%,#0f0_67%)] bg-size-[11px_100%] bg-center bg-no-repeat [writing-mode:vertical-lr] [&::-webkit-slider-thumb]:h-[5px] [&::-webkit-slider-thumb]:w-[14px] [&::-webkit-slider-thumb]:appearance-none [&::-webkit-slider-thumb]:border-r [&::-webkit-slider-thumb]:border-b [&::-webkit-slider-thumb]:border-[#888] [&::-webkit-slider-thumb]:bg-[#f0f0f0]"
      />
    </div>
    <div className="h-px bg-[#a0a0a0]" />
    <RailGrip />
    <div className="flex flex-col items-center gap-[2px] pt-2 pb-[2px] text-[#333]">
      {[20, 30, 40, 50, 60, 70, 80, 90, 100, 200].map((n) => (
        <button key={n} className={clsx('h-[17px] w-[23px] text-[10px] leading-none', n === 200 ? pressed : 'border border-[#adadad] bg-[#e1e1e1]')}>{n}</button>
      ))}
      <Tool label="Zoom" className="size-[23px]">
        <svg viewBox="0 0 16 16" className="size-4" fill="none"><circle cx="6" cy="6" r="4.500" fill="#fff" stroke="#333" /><path d="M6 3.500v5M3.500 6h5" stroke="#f00" /><path d="M10 10l5 5" stroke="#000" strokeWidth="2.500" /></svg>
      </Tool>
    </div>
  </aside>
);

const IndicatorPopup = () => (
  <div role="dialog" aria-labelledby="indicator-title" className="absolute top-[251px] left-[185px] flex h-[307px] w-[246px] flex-col overflow-hidden rounded-[14px] border border-[#555] bg-white text-[11px] leading-[14px]">
    <div className="flex h-5 items-center bg-[#99b4d1] pr-[11px] pl-[14px]">
      <h2 id="indicator-title" className="flex-1">Indicator Information</h2>
      <button aria-label="Close">
        <svg viewBox="0 0 8 8" className="size-2" stroke="#fff" strokeWidth="1.500"><path d="M0 0l8 8M8 0L0 8" /></svg>
      </button>
    </div>
    <div className="flex-1 px-[6px] pt-1">
      <h3 className="text-[12px] leading-[14px] font-bold text-[#008000]">Shake-out</h3>
      <p className="mt-[14px]">This appears over two bars and indicates<br />strength.</p>
      <h3 className="mt-7 text-[12px] leading-[14px] font-bold text-[#0000ff]">Supplementary Comments:</h3>
      <p className="mt-4 whitespace-nowrap text-[#0000ff]">
        The previous bar has shown strength, this has<br />caused interest with professional traders.<br />Ignore this signal if the previous bar is up on<br />very high to ultra-high volume (supply<br />swamping demand)
      </p>
      <p className="mt-[14px] whitespace-nowrap text-[#0000ff]">
        We always have to look at what the market<br />makers are doing. Here they have marked the<br />market up because of the strength on the<br />previous bar.
      </p>
    </div>
    <div className="flex h-5 items-center justify-center border-t border-[#888] bg-[#99b4d1]">Press Esc to exit</div>
  </div>
);

const ChartPanel = () => (
  <main className="mr-[10px] ml-[9px] min-w-0 flex-1 pt-[9px]">
    <div className="relative border border-t-0 border-[#696969]">
      <div className="flex h-[22px] items-center bg-black pt-px pr-1 pl-[5px] text-[14px] whitespace-nowrap text-white">
        <span className="w-[45px]">HDC</span>
        <span className="w-[73px]">25 Feb 19</span>
        <span className="w-[60px]">O 12.17</span>
        <span className="w-[59px]">H 12.30</span>
        <span className="w-[56px]">L 12.17</span>
        <span className="w-[59px] bg-[#0000ff] leading-[20px]">C 12.30</span>
        <span className="flex-1">V 119660</span>
        <button aria-label="Chart options"><svg viewBox="0 0 8 9" className="h-[9px] w-2"><path d="M0 0h8L4 9z" fill="#fff" /></svg></button>
      </div>
      <PriceChart />
      <div className="h-[6px] bg-[linear-gradient(#a0a0a0_1px,#99b4d1_1px_2px,#fff_2px_3px,#a0a0a0_3px_4px,#99b4d1_4px_5px,#fff_5px)]" />
      <VolumeChart />
      <span className="absolute top-[391px] left-[431px] h-7 w-[3px] rounded-r border-r border-[#777] bg-[#99b4d1]" />
      <IndicatorPopup />
    </div>
    <div className="mt-2 flex h-4 items-center border-t border-[#a0a0a0] px-[5px]">
      <button aria-label="Scroll left"><svg viewBox="0 0 5 8" className="h-2 w-[5px]" fill="none" stroke="#444" strokeWidth="1.500"><path d="M4.500 0L1 4l3.500 4" /></svg></button>
      <div className="flex flex-1 justify-end pr-[412px]"><span className="h-[14px] w-[17px] bg-[#cdcdcd]" /></div>
      <button aria-label="Scroll right"><svg viewBox="0 0 5 8" className="h-2 w-[5px]" fill="none" stroke="#444" strokeWidth="1.500"><path d="M.5 0L4 4 .5 8" /></svg></button>
    </div>
  </main>
);

const StatusBar = () => (
  <footer className="mt-3 border-t border-white text-[11px]">
    <div className="mx-[2px] h-1 border-b border-[#a0a0a0] bg-[#99b4d1]" />
    <div className="flex h-[25px] border-b border-[#a0a0a0]">
      <div className="w-[53px] shrink-0 pt-[3px] pl-1">
        <div className="grid h-[18px] w-[43px] grid-cols-4 gap-px bg-[#a0a0a0]">
          <span className="bg-[#00ffff]" /><span className="bg-[#00ff00]" /><span className="bg-[#ff00ff]" /><span className="bg-[#ff0000]" />
          <span className="bg-[#008000]" /><span className="bg-[#800080]" /><span className="bg-[#800000]" /><span className="bg-[#808000]" />
        </div>
      </div>
      <div className="flex flex-1 items-center border-r border-[#a0a0a0] text-center">
        <span className="w-[148px]">Bar: Up</span>
        <span className="w-[169px]">Close: High</span>
        <span className="w-[141px]">Vol: High</span>
        <span className="w-[166px]">Spr: Narrow</span>
        <span className="w-[178px]">Chg: Narrow</span>
      </div>
      <div className="flex-1 border-r border-[#a0a0a0]" />
      <div className="flex w-[78px] shrink-0 items-center justify-between border-r border-[#a0a0a0] px-1">
        <span>Diff</span><span className="text-[#008000]">4</span>
      </div>
      <div className="flex w-[117px] shrink-0 items-center pl-2 text-[12px] text-[#000080]">Mon, 20 Jan 2020</div>
    </div>
    <div className="flex h-[18px]">
      <div className="flex w-[53px] shrink-0 items-center gap-2 pl-[5px]">
        Help
        <svg viewBox="0 0 14 14" className="h-[14px] w-[14px]"><circle cx="7" cy="6" r="6" fill="#ffff00" /><path d="M2 12c2-2 1-9 5-9s3 7 5 9z" fill="#ff0000" /></svg>
      </div>
      <div className="flex-1 border-r border-[#a0a0a0]" />
      <div className="flex flex-1 items-center gap-1 border-r border-[#a0a0a0] pl-3">
        <svg viewBox="0 0 8 7" className="h-[7px] w-2"><path d="M4 0l4 7H0z" fill="#00a000" stroke="#000" /></svg>
        [SOS 125] Shake-out
      </div>
      <div className="flex w-[78px] shrink-0 items-center justify-between border-r border-[#a0a0a0] px-1">
        <span>Price</span><span>11.00</span>
      </div>
      <div className="flex w-[117px] shrink-0 items-center justify-between pr-[5px] pl-3 text-[#0000ff]">
        <span className="font-['Liberation_Mono','Courier_New',monospace]">14:40:00</span>
        <Tool label="Refresh" className="mt-px h-[22px] w-[31px] self-start">
          <svg viewBox="0 0 14 14" className="size-[14px]"><circle cx="7" cy="7" r="6" fill="#00b000" stroke="#004000" /><path d="M4 7l3-3 3 3" stroke="#fff" strokeWidth="2" fill="none" /></svg>
        </Tool>
      </div>
    </div>
  </footer>
);

export default function App() {
  return (
    <div className="h-screen overflow-hidden bg-[#f0f0f0] font-['Liberation_Sans',Arial,sans-serif] text-black">
      <TitleBar />
      <Toolbars />
      <ChartTabs />
      <div className="flex">
        <LeftRail />
        <ChartPanel />
        <RightRail />
      </div>
      <StatusBar />
    </div>
  );
}
